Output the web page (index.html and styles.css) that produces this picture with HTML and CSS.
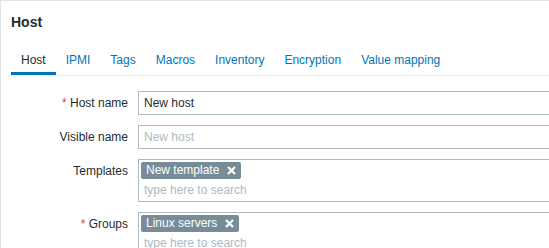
FILE: index.html
```html
<!DOCTYPE html>
<html>
<head>
<meta charset="utf-8">
<link rel="stylesheet" href="styles.css">
</head>
<body>
<div class="dialog">
  <div class="head"><h2 class="title">Host</h2></div>
  <ul class="tabs">
    <li class="tab active">Host</li>
    <li class="tab">IPMI</li>
    <li class="tab">Tags</li>
    <li class="tab">Macros</li>
    <li class="tab">Inventory</li>
    <li class="tab">Encryption</li>
    <li class="tab">Value mapping</li>
  </ul>
  <div class="form">
    <label class="lbl"><span class="req">*</span> Host name</label>
    <div class="field"><div class="input">New host</div></div>

    <label class="lbl">Visible name</label>
    <div class="field"><div class="input ph">New host</div></div>

    <label class="lbl">Templates</label>
    <div class="field">
      <div class="ms">
        <div class="tags"><span class="tag">New template<svg class="x" viewBox="0 0 9 9" width="9" height="9"><path d="M1 1 L8 8 M8 1 L1 8" stroke="#fff" stroke-width="2.2"/></svg></span></div>
        <div class="ms-input">type here to search</div>
      </div>
    </div>

    <label class="lbl"><span class="req">*</span> Groups</label>
    <div class="field">
      <div class="ms">
        <div class="tags"><span class="tag">Linux servers<svg class="x" viewBox="0 0 9 9" width="9" height="9"><path d="M1 1 L8 8 M8 1 L1 8" stroke="#fff" stroke-width="2.2"/></svg></span></div>
        <div class="ms-input">type here to search</div>
      </div>
    </div>
  </div>
</div>
</body>
</html>
```
FILE: styles.css
```css
html, body {
  margin: 0;
  padding: 0;
  background: #fff;
  overflow: hidden;
}
body {
  font-family: "Liberation Sans", Arial, sans-serif;
  font-size: 12px;
  color: #1f2c33;
  width: 549px;
  height: 248px;
}
.dialog {
  border-top: 1px solid #dfe4e7;
  border-left: 1px solid #dfe4e7;
  box-sizing: border-box;
  height: 248px;
  overflow: hidden;
}
.head {
  padding: 13px 10px 0;
}
.title {
  margin: 0;
  font-size: 14px;
  line-height: 16px;
  font-weight: bold;
  color: #1f2c33;
}
.tabs {
  list-style: none;
  margin: 16px 0 0 10px;
  padding: 0;
  display: flex;
  border-bottom: 1px solid #ebeef0;
}
.tab {
  padding: 7px 10px 5px;
  line-height: 14px;
  color: #0275b8;
  border-bottom: 3px solid transparent;
}
.tab.active {
  color: #1f2c33;
  border-bottom-color: #0275b8;
}
.form {
  margin-top: 15px;
  display: grid;
  grid-template-columns: 127px 453px;
  column-gap: 10px;
  row-gap: 10px;
}
.lbl {
  text-align: right;
  line-height: 24px;
  color: #1f2c33;
}
.req {
  color: #e33734;
}
.input {
  height: 24px;
  box-sizing: border-box;
  border: 1px solid #acbbc2;
  padding: 0 5px;
  line-height: 22px;
  color: #1f2c33;
}
.input.ph {
  color: #acbbc2;
}
.ms {
  border: 1px solid #acbbc2;
}
.tags {
  display: flex;
  padding: 2px 0 0 2px;
}
.tag {
  display: inline-flex;
  align-items: center;
  height: 17px;
  line-height: 17px;
  background: #768d99;
  color: #fff;
  border-radius: 2px;
  padding: 0 5px;
}
.x {
  margin-left: 8px;
  display: block;
}
.ms-input {
  height: 22px;
  line-height: 22px;
  padding-left: 5px;
  color: #acbbc2;
}
```
